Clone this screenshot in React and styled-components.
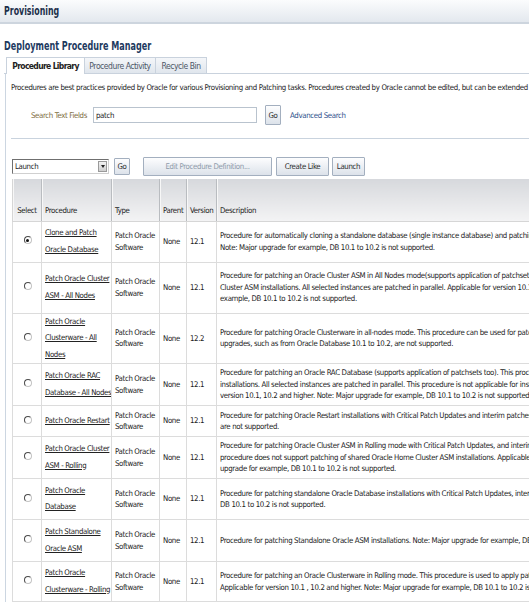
import React from "react";
import styled, { createGlobalStyle, css } from "styled-components";

const narrow = `"DejaVu Sans Condensed", "Liberation Sans", sans-serif`;

const GlobalStyle = createGlobalStyle`
  html, body {
    margin: 0;
    padding: 0;
    background: #fff;
  }
  body {
    width: 529px;
    height: 602px;
    overflow: hidden;
    font-family: ${narrow};
    font-size: 7.8px;
    letter-spacing: -0.35px;
    color: #222;
  }
`;

/* the bold headings are drawn in a narrow face in the reference */
const Squeezed = styled.span`
  display: inline-block;
  white-space: nowrap;
  transform: scaleX(${(p) => p.$x || 0.78});
  transform-origin: left center;
`;

const TitleBar = styled.div`
  height: 22px;
  display: flex;
  align-items: center;
  padding-left: 4px;
  background: linear-gradient(#fbfcfd, #e3e8ee);
  border-bottom: 2px solid #cdd5de;

  h1 {
    margin: 0;
    font-size: 11.5px;
    letter-spacing: 0;
    font-weight: bold;
    color: #1c2f4a;
  }
`;

const Main = styled.div`
  padding: 15px 0 0 4px;
`;

const PageTitle = styled.h2`
  margin: 0 0 4px;
  font-size: 11.5px;
  letter-spacing: 0;
  line-height: 14px;
  font-weight: bold;
  color: #1d3a5f;
`;

const TabStrip = styled.div`
  display: flex;
  padding-left: 2px;
  height: 16px;
  border-bottom: 1px solid #c9d2dd;
`;

const Tab = styled.div`
  box-sizing: border-box;
  width: ${(p) => p.$w}px;
  display: flex;
  align-items: center;
  justify-content: center;
  margin-right: -1px;
  font-size: 8.5px;
  letter-spacing: -0.45px;
  white-space: nowrap;
  border: 1px solid #c9d2dd;
  border-bottom: none;
  color: #4c5666;
  background: linear-gradient(#f4f6f9, #e0e6ed);

  ${(p) =>
    p.$active &&
    css`
      font-weight: bold;
      letter-spacing: -0.65px;
      color: #222;
      background: #fff;
      height: 17px;
      position: relative;
      z-index: 1;
    `}
`;

const Panel = styled.div`
  border-left: 1px solid #ccd6e1;
  margin-left: 1px;
  padding: 8px 0 0 5px;
`;

const Intro = styled.p`
  margin: 0;
  line-height: 12px;
  white-space: nowrap;
`;

const SearchRow = styled.div`
  display: flex;
  align-items: center;
  height: 20px;
  margin-top: 11px;
`;

const Label = styled.label`
  width: 76px;
  text-align: right;
  color: #7d6c3e;
  margin-right: 6px;
  white-space: nowrap;
`;

const TextInput = styled.div`
  width: 160px;
  height: 14px;
  border: 1px solid #b9c3ce;
  display: flex;
  align-items: center;
  padding-left: 2px;
  color: #222;
`;

const Button = styled.button`
  font-family: ${narrow};
  font-size: 7.8px;
  letter-spacing: -0.35px;
  white-space: nowrap;
  height: ${(p) => p.$h || 19}px;
  width: ${(p) => p.$w}px;
  margin-left: ${(p) => p.$ml || 0}px;
  padding: 0;
  border: 1px solid #a3afbf;
  border-radius: 1px;
  background: linear-gradient(#fdfdfe, #dce2ea);
  color: ${(p) => (p.disabled ? "#8d99a9" : "#2a2a2a")};
`;

const LinkText = styled.span`
  color: #2e4f8b;
  margin-left: 9px;
`;

const Divider = styled.div`
  border-top: 1px solid #c9d3de;
  margin-top: 13px;
`;

const Toolbar = styled.div`
  display: flex;
  align-items: center;
  height: 19px;
  margin-top: 18px;
  padding-left: 1px;
`;

const Select = styled.div`
  width: 93px;
  height: 13px;
  border: 1px solid #6f6f6f;
  border-right-color: #d0d0d0;
  border-bottom-color: #d0d0d0;
  display: flex;
  align-items: center;
  justify-content: space-between;
  padding-left: 2px;
  background: #fff;

  i {
    width: 9px;
    height: 11px;
    margin-right: 1px;
    background: linear-gradient(#f2f2f2, #cfcfcf);
    border: 1px solid #9a9a9a;
    box-sizing: border-box;
    display: flex;
    align-items: center;
    justify-content: center;
  }
  i::after {
    content: "";
    border-left: 2.5px solid transparent;
    border-right: 2.5px solid transparent;
    border-top: 3px solid #222;
  }
`;

const Table = styled.table`
  margin: 3px 0 0 1px;
  border-collapse: collapse;
  table-layout: fixed;
  width: 760px;
`;

const Th = styled.th`
  box-sizing: border-box;
  width: ${(p) => (p.$w ? `${p.$w}px` : "auto")};
  height: 42px;
  padding: 0 3px 4px;
  vertical-align: bottom;
  text-align: ${(p) => (p.$center ? "center" : "left")};
  font-weight: normal;
  line-height: 12px;
  color: #222;
  white-space: nowrap;
  background: linear-gradient(#d6d8dc, #f3f3f4);
  border-left: 1px solid #b9bcc0;
  border-bottom: 1px solid #d6d6d6;
  box-shadow: inset 1px 0 0 #f7f7f7;

  &:first-child {
    border-left: 1px solid #d6d6d6;
  }
`;

const Tr = styled.tr`
  height: ${(p) => p.$h}px;
`;

const Td = styled.td`
  box-sizing: border-box;
  padding: 0 2px 0 3px;
  vertical-align: middle;
  line-height: 11.5px;
  border: 1px solid #dcdcdc;
  text-align: ${(p) => (p.$center ? "center" : "left")};
  overflow: hidden;
`;

const ProcLink = styled.a`
  display: block;
  color: #222;
  text-decoration: underline;
  line-height: 16.5px;
`;

const Radio = styled.span`
  display: inline-block;
  width: 6px;
  height: 6px;
  border-radius: 50%;
  border: 1px solid;
  border-color: #4a4a4a #c4c4c4 #c4c4c4 #4a4a4a;
  background: #fff;
  position: relative;
  vertical-align: middle;
  margin-bottom: 3px;

  ${(p) =>
    p.$checked &&
    css`
      &::after {
        content: "";
        position: absolute;
        left: 1.5px;
        top: 1.5px;
        width: 3px;
        height: 3px;
        border-radius: 50%;
        background: #111;
      }
    `}
`;

const Line = styled.div`
  white-space: nowrap;
`;

const procedures = [
  {
    name: ["Clone and Patch", "Oracle Database"],
    h: 41,
    desc: [
      "Procedure for automatically cloning a standalone database (single instance database) and patching it with Critical Patch Updates.",
      "Note: Major upgrade for example, DB 10.1 to 10.2 is not supported.",
    ],
  },
  {
    name: ["Patch Oracle Cluster", "ASM - All Nodes"],
    h: 51,
    desc: [
      "Procedure for patching an Oracle Cluster ASM in All Nodes mode(supports application of patchsets too). This procedure patches Oracle",
      "Cluster ASM installations. All selected instances are patched in parallel. Applicable for version 10.1, 10.2 and higher. Note: Major upgrade for",
      "example, DB 10.1 to 10.2 is not supported.",
    ],
  },
  {
    name: ["Patch Oracle", "Clusterware - All", "Nodes"],
    h: 49,
    version: "12.2",
    desc: [
      "Procedure for patching Oracle Clusterware in all-nodes mode. This procedure can be used for patching Oracle Clusterware. Major",
      "upgrades, such as from Oracle Database 10.1 to 10.2, are not supported.",
    ],
  },
  {
    name: ["Patch Oracle RAC", "Database - All Nodes"],
    h: 42,
    desc: [
      "Procedure for patching an Oracle RAC Database (supports application of patchsets too). This procedure patches Oracle RAC Database",
      "installations. All selected instances are patched in parallel. This procedure is not applicable for instances of Oracle Database",
      "version 10.1, 10.2 and higher. Note: Major upgrade for example, DB 10.1 to 10.2 is not supported.",
    ],
  },
  {
    name: ["Patch Oracle Restart"],
    h: 31,
    desc: [
      "Procedure for patching Oracle Restart installations with Critical Patch Updates and interim patches. Major upgrades",
      "are not supported.",
    ],
  },
  {
    name: ["Patch Oracle Cluster", "ASM - Rolling"],
    h: 42,
    desc: [
      "Procedure for patching Oracle Cluster ASM in Rolling mode with Critical Patch Updates, and interim patches. This",
      "procedure does not support patching of shared Oracle Home Cluster ASM installations. Applicable for version 10.1, 10.2. Major",
      "upgrade for example, DB 10.1 to 10.2 is not supported.",
    ],
  },
  {
    name: ["Patch Oracle", "Database"],
    h: 41,
    desc: [
      "Procedure for patching standalone Oracle Database installations with Critical Patch Updates, interim patches. Major upgrade for example,",
      "DB 10.1 to 10.2 is not supported.",
    ],
  },
  {
    name: ["Patch Standalone", "Oracle ASM"],
    h: 42,
    desc: [
      "Procedure for patching Standalone Oracle ASM installations. Note: Major upgrade for example, DB 10.1 to 10.2 is not supported.",
    ],
  },
  {
    name: ["Patch Oracle", "Clusterware - Rolling"],
    h: 40,
    desc: [
      "Procedure for patching an Oracle Clusterware in Rolling mode. This procedure is used to apply patches to Oracle Clusterware.",
      "Applicable for version 10.1 , 10.2 and higher. Note: Major upgrade for example, DB 10.1 to 10.2 is not supported.",
    ],
  },
];

export default function App() {
  return (
    <>
      <GlobalStyle />
      <TitleBar>
        <h1>
          <Squeezed $x={0.76}>Provisioning</Squeezed>
        </h1>
      </TitleBar>
      <Main>
        <PageTitle>
          <Squeezed $x={0.78}>Deployment Procedure Manager</Squeezed>
        </PageTitle>
        <TabStrip>
          <Tab $active $w={79}>Procedure Library</Tab>
          <Tab $w={72}>Procedure Activity</Tab>
          <Tab $w={52}>Recycle Bin</Tab>
        </TabStrip>
        <Panel>
          <Intro>
            Procedures are best practices provided by Oracle for various Provisioning and Patching tasks.
            Procedures created by Oracle cannot be edited, but can be extended using Create Like.
          </Intro>

          <SearchRow>
            <Label>Search Text Fields</Label>
            <TextInput>patch</TextInput>
            <Button $w={16} $h={20} $ml={8}>Go</Button>
            <LinkText>Advanced Search</LinkText>
          </SearchRow>

          <Divider />

          <Toolbar>
            <Select>
              Launch
              <i />
            </Select>
            <Button $w={16} $h={17} $ml={5}>Go</Button>
            <Button $w={129} $ml={13} disabled>Edit Procedure Definition...</Button>
            <Button $w={53} $ml={4}>Create Like</Button>
            <Button $w={33} $ml={3}>Launch</Button>
          </Toolbar>

          <Table>
            <thead>
              <tr>
                <Th $w={29} $center>Select</Th>
                <Th $w={70}>Procedure</Th>
                <Th $w={48}>Type</Th>
                <Th $w={27}>Parent</Th>
                <Th $w={30}>Version</Th>
                <Th>Description</Th>
              </tr>
            </thead>
            <tbody>
              {procedures.map((p, i) => (
                <Tr key={p.name.join(" ")} $h={p.h}>
                  <Td $center>
                    <Radio $checked={i === 0} />
                  </Td>
                  <Td>
                    <ProcLink href="#">
                      {p.name.map((n) => (
                        <Line key={n}>{n}</Line>
                      ))}
                    </ProcLink>
                  </Td>
                  <Td>
                    <Line>Patch Oracle</Line>
                    <Line>Software</Line>
                  </Td>
                  <Td>None</Td>
                  <Td>{p.version || "12.1"}</Td>
                  <Td>
                    {p.desc.map((d) => (
                      <Line key={d}>{d}</Line>
                    ))}
                  </Td>
                </Tr>
              ))}
            </tbody>
          </Table>
        </Panel>
      </Main>
    </>
  );
}
